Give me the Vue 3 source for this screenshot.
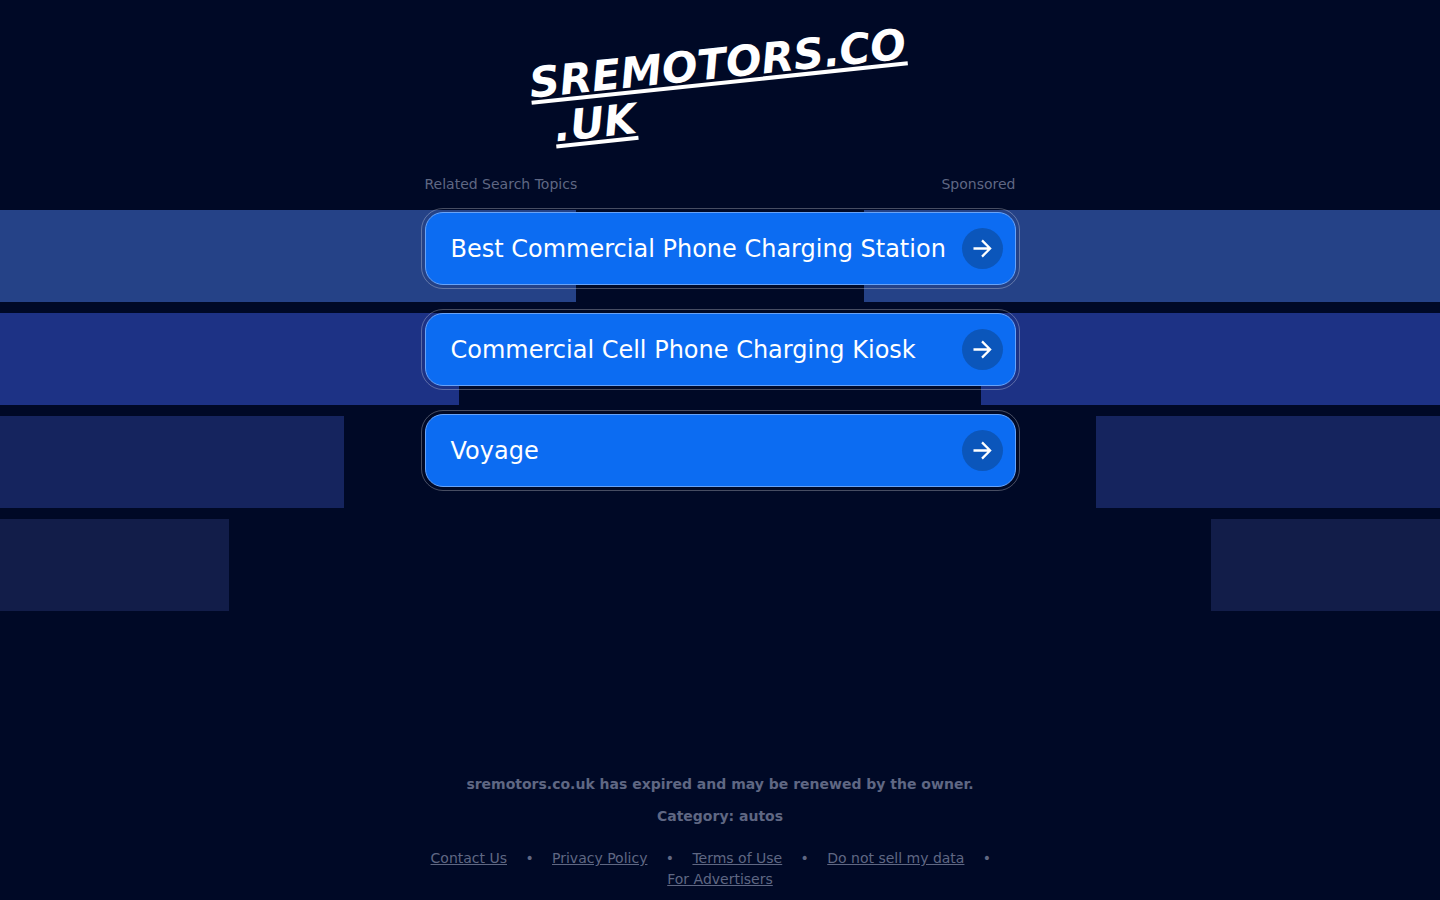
<template>
    <div class="page">
        <div class="stripes" aria-hidden="true">
            <div v-for="width in stripes" :key="width" class="stripe-row">
                <span class="stripe" :style="{ width: width + '%' }"></span>
                <span class="stripe" :style="{ width: width + '%' }"></span>
            </div>
        </div>
        <div class="container">
            <header>
                <h1 class="domain">sremotors.co.uk</h1>
            </header>
            <main>
                <div class="labels">
                    <span>Related Search Topics</span>
                    <span>Sponsored</span>
                </div>
                <ul class="topics">
                    <li v-for="topic in topics" :key="topic">
                        <a href="#" class="topic">
                            <span class="topic-title">{{ topic }}</span>
                            <span class="arrow">
                                <svg viewBox="0 0 20 20" width="19" height="19" aria-hidden="true">
                                    <path d="M0.5 10H17.5M9.5 1.5L18 10L9.5 18.5" />
                                </svg>
                            </span>
                        </a>
                    </li>
                </ul>
            </main>
            <footer>
                <p class="notice">sremotors.co.uk has expired and may be renewed by the owner.</p>
                <p class="notice">Category: autos</p>
                <nav class="links">
                    <template v-for="(link, index) in links" :key="link">
                        <a href="#">{{ link }}</a>
                        <span v-if="index < links.length - 1" class="dot">•</span>
                    </template>
                </nav>
            </footer>
        </div>
    </div>
</template>

<script setup>
import { ref } from 'vue';

// width of each background row, in percent of the page
const stripes = [40, 31.9, 23.9, 15.9];

const topics = ref([
    'Best Commercial Phone Charging Station',
    'Commercial Cell Phone Charging Kiosk',
    'Voyage',
]);

const links = [
    'Contact Us',
    'Privacy Policy',
    'Terms of Use',
    'Do not sell my data',
    'For Advertisers',
];
</script>

<style>
body {
    margin: 0;
    background: #000926;
}
</style>

<style scoped>
.page {
    position: relative;
    display: flex;
    justify-content: center;
    box-sizing: border-box;
    min-height: 100vh;
    overflow: hidden;
    font-family: "DejaVu Sans", sans-serif;
    font-size: 14px;
    line-height: 21px;
    color: #5f6783;
}

.stripes {
    position: absolute;
    top: 210px;
    left: 0;
    right: 0;
    display: grid;
    gap: 11px;
}

.stripe-row {
    display: flex;
    justify-content: space-between;
    height: 92px;
}

.stripe-row:nth-child(1) .stripe {
    background: #254287;
}

.stripe-row:nth-child(2) .stripe {
    background: #1d3285;
}

.stripe-row:nth-child(3) .stripe {
    background: #15245e;
}

.stripe-row:nth-child(4) .stripe {
    background: #121d49;
}

.container {
    position: relative;
    display: flex;
    flex-direction: column;
    width: 100%;
    max-width: 591px;
}

header {
    padding: 41px 0;
}

.domain {
    box-sizing: border-box;
    max-width: 379px;
    margin: 0 auto;
    padding-left: 20px;
    color: #fff;
    font-size: 42px;
    font-style: italic;
    line-height: 46px;
    text-decoration: underline;
    text-indent: -20px;
    text-transform: uppercase;
    overflow-wrap: anywhere;
    transform: rotate(-6deg);
}

.labels {
    display: flex;
    justify-content: space-between;
}

.topics {
    display: grid;
    gap: 28px;
    margin: 0;
    padding: 17px 0 0;
    list-style: none;
}

.topic {
    display: flex;
    align-items: center;
    justify-content: space-between;
    box-sizing: border-box;
    min-height: 73px;
    padding: 12px 12px 12px 25px;
    border: 1px solid #68a3f8;
    border-radius: 18px;
    outline: 1px solid rgba(255, 255, 255, 0.28);
    outline-offset: 3px;
    background: #0c6cf2;
    color: #fff;
    font-size: 24px;
    line-height: 36px;
    text-decoration: none;
}

.topic:hover {
    background: #0a5fd8;
}

.arrow {
    display: flex;
    flex: none;
    align-items: center;
    justify-content: center;
    width: 41px;
    height: 41px;
    border-radius: 50%;
    background: #0b56bb;
}

.arrow path {
    fill: none;
    stroke: #fff;
    stroke-width: 2.4;
}

footer {
    margin-top: auto;
    padding-bottom: 10px;
    text-align: center;
}

.notice {
    margin: 0 0 11px;
    font-weight: bold;
}

.links {
    display: flex;
    flex-wrap: wrap;
    justify-content: center;
    margin-top: 21px;
}

.links a {
    color: inherit;
}

.dot {
    width: 45px;
}
</style>
